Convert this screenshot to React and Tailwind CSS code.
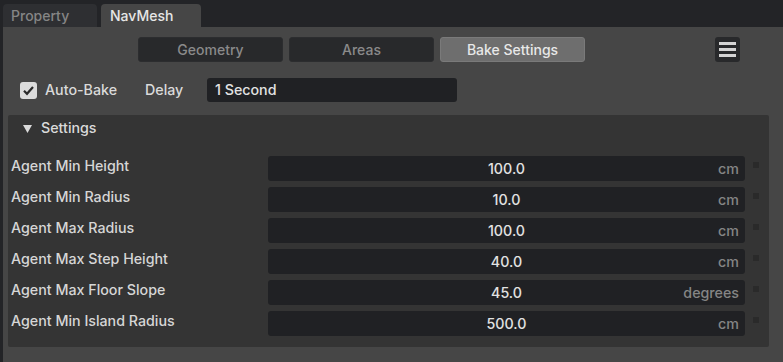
// NavMesh property panel — tab strip, bake mode buttons and agent settings list.
const rows = [
  { label: 'Agent Min Height', value: '100.0', unit: 'cm' },
  { label: 'Agent Min Radius', value: '10.0', unit: 'cm' },
  { label: 'Agent Max Radius', value: '100.0', unit: 'cm' },
  { label: 'Agent Max Step Height', value: '40.0', unit: 'cm' },
  { label: 'Agent Max Floor Slope', value: '45.0', unit: 'degrees' },
  { label: 'Agent Min Island Radius', value: '500.0', unit: 'cm' },
]

function ModeButton({ children, active }) {
  return (
    <button
      type="button"
      className={
        active
          ? 'h-[25px] w-[145px] rounded-[3px] border border-[#7a7a7a] bg-[#6e6e6e] text-[14px] font-medium text-[#e8e8e8]'
          : 'h-[25px] w-[145px] rounded-[3px] border border-[#2c2d2f] bg-[#28292b] text-[14px] font-medium text-[#8a8a8a]'
      }
    >
      {children}
    </button>
  )
}

function SettingRow({ label, value, unit }) {
  return (
    <div className="flex h-[25px] items-start">
      <div className="w-[257px] -mt-[1px] text-[14.25px] font-medium text-[#d6d6d6]">{label}</div>
      <div className="relative flex h-[25px] w-[477px] items-center justify-center rounded-[3px] bg-[#202124]">
        <span className="text-[14.25px] font-medium text-[#e2e2e2]">{value}</span>
        <span className="absolute right-[6px] text-[14.25px] font-medium text-[#858585]">{unit}</span>
      </div>
      <div className="ml-[8px] mt-[6px] h-[6px] w-[6px] bg-[#2a2a2a]" />
    </div>
  )
}

export default function App() {
  return (
    <div
      className="flex h-[362px] w-[783px] flex-col bg-[#232427]"
      style={{ fontFamily: 'Inter, Roboto, "Liberation Sans", sans-serif' }}
    >
      {/* tabs */}
      <div className="flex h-[27px] items-end gap-[4px] pl-[3px]">
        <div className="flex h-[23px] w-[94px] items-center rounded-t-[4px] bg-[#2e2f32] pl-[8px] text-[14px] font-medium text-[#858585]">
          Property
        </div>
        <div className="flex h-[23px] w-[100px] items-center rounded-t-[4px] bg-[#464646] pl-[9px] text-[14px] font-medium text-[#e6e6e6]">
          NavMesh
        </div>
      </div>

      <div className="ml-[3px] flex flex-1 flex-col bg-[#464646]">
        {/* mode buttons */}
        <div className="mt-[10px] flex h-[25px] items-center">
          <div className="ml-[135px] flex gap-[6px]">
            <ModeButton>Geometry</ModeButton>
            <ModeButton>Areas</ModeButton>
            <ModeButton active>Bake Settings</ModeButton>
          </div>
          <button
            type="button"
            className="ml-auto mr-[43px] flex h-[25px] w-[25px] flex-col items-center justify-center gap-[3px] rounded-[3px] bg-[#28292b]"
          >
            <span className="h-[3px] w-[17px] bg-[#d4d4d4]" />
            <span className="h-[3px] w-[17px] bg-[#d4d4d4]" />
            <span className="h-[3px] w-[17px] bg-[#d4d4d4]" />
          </button>
        </div>

        {/* auto bake */}
        <div className="mt-[16px] flex h-[24px] items-center">
          <div className="ml-[17px] flex h-[17px] w-[17px] items-center justify-center rounded-[3px] bg-[#dcdcdc]">
            <svg width="13" height="13" viewBox="0 0 13 13">
              <path d="M2 6.8 L5 9.8 L11 3" fill="none" stroke="#2a2a2a" strokeWidth="2.2" />
            </svg>
          </div>
          <span className="ml-[8px] w-[100px] text-[14.25px] font-medium text-[#dadada]">Auto-Bake</span>
          <span className="w-[62px] text-[14.25px] font-medium text-[#dadada]">Delay</span>
          <div className="flex h-[24px] w-[250px] items-center rounded-[3px] bg-[#202124] pl-[8px] text-[14.25px] font-medium text-[#e2e2e2]">
            1 Second
          </div>
        </div>

        {/* settings */}
        <div className="ml-[5px] mt-[13px] flex h-[232px] w-[761px] flex-col rounded-[2px] bg-[#343434]">
          <div className="flex h-[26px] items-center">
            <svg className="ml-[15px]" width="9" height="9" viewBox="0 0 9 9">
              <path d="M0 1 L9 1 L4.5 9 Z" fill="#dadada" />
            </svg>
            <span className="ml-[9px] text-[14.25px] font-medium text-[#dadada]">Settings</span>
          </div>
          <div className="ml-[3px] mt-[15px] flex flex-col gap-[6px]">
            {rows.map((r) => (
              <SettingRow key={r.label} {...r} />
            ))}
          </div>
        </div>
      </div>
    </div>
  )
}
